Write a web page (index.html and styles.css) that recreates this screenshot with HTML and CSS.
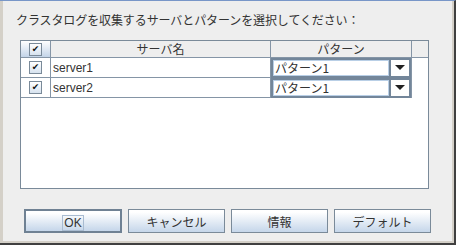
FILE: index.html
```html
<!DOCTYPE html>
<html lang="ja">
<head>
  <meta charset="UTF-8">
  <title>クラスタログ収集</title>
  <link rel="stylesheet" href="styles.css">
</head>
<body>
  <div class="frame">
    <div class="dialog">
      <p class="prompt">クラスタログを収集するサーバとパターンを選択してください：</p>

      <div class="grid">
        <div class="row head">
          <div class="cell c-check sel"><span class="box">✔</span></div>
          <div class="cell c-name">サーバ名</div>
          <div class="cell c-pat">パターン</div>
          <div class="cell c-fill"></div>
        </div>
        <div class="row">
          <div class="cell c-check"><span class="box">✔</span></div>
          <div class="cell c-name">server1</div>
          <div class="cell c-pat">
            <div class="combo"><span class="val">パターン1</span><span class="arrow"></span></div>
          </div>
        </div>
        <div class="row">
          <div class="cell c-check"><span class="box">✔</span></div>
          <div class="cell c-name">server2</div>
          <div class="cell c-pat">
            <div class="combo"><span class="val">パターン1</span><span class="arrow"></span></div>
          </div>
        </div>
      </div>

      <div class="buttons">
        <button class="btn default"><span class="focus">OK</span></button>
        <button class="btn">キャンセル</button>
        <button class="btn">情報</button>
        <button class="btn">デフォルト</button>
      </div>
    </div>
  </div>
</body>
</html>
```

FILE: styles.css
```css
* { box-sizing: border-box; margin: 0; padding: 0; }
body {
  width: 456px;
  height: 245px;
  overflow: hidden;
  background: #eeeeee;
  font-family: "Liberation Sans", "Noto Sans CJK JP", sans-serif;
  font-size: 12px;
  color: #333;
}
.frame {
  width: 456px;
  height: 245px;
  border-top: 1px solid #7896c8;
  border-right: 2px solid #404040;
  border-bottom: 2px solid #404040;
}
.dialog {
  height: 100%;
  background: #eeeeee;
  border-left: 3px solid #d4d0c8;
  border-right: 2px solid #d4d0c8;
  border-bottom: 2px solid #d4d0c8;
  padding: 11px 0 0 13px;
}
.prompt {
  font-family: "Noto Sans CJK JP", sans-serif;
  line-height: 16px;
  height: 16px;
  letter-spacing: -0.1px;
}
.grid {
  margin: 12px 0 0 4px;
  width: 409px;
  height: 149px;
  border: 1px solid #7a8a99;
  background: #fff;
}
.row {
  display: flex;
  height: 20px;
}
.row.head {
  height: 17px;
  background: #eeeeee;
}
.cell {
  border-right: 1px solid #8595a6;
  border-bottom: 1px solid #8595a6;
  display: flex;
  align-items: center;
  line-height: 16px;
}
.c-check { width: 30px; justify-content: center; }
.c-name { width: 220px; padding-left: 2px; }
.c-pat { width: 141px; border-bottom: none; }
.c-fill { flex: 1; border-right: none; }
.head .c-name, .head .c-pat {
  justify-content: center;
  font-family: "Noto Sans CJK JP", sans-serif;
  padding: 0;
}
.head .c-pat { border-bottom: 1px solid #8595a6; }
.head .sel { background: linear-gradient(#ffffff, #c3d4e8); }
.box {
  width: 13px;
  height: 13px;
  border: 1px solid #7a8a99;
  background: linear-gradient(#ffffff, #d6e2ef);
  font-size: 9px;
  line-height: 11px;
  text-align: center;
  color: #111;
  font-family: "DejaVu Sans", sans-serif;
}
.combo {
  display: flex;
  width: 100%;
  height: 100%;
  border: 2px solid #73869a;
  background: #fff;
}
.val {
  flex: 1;
  border: 1px solid #b9cfe6;
  font-family: "Noto Sans CJK JP", sans-serif;
  line-height: 14px;
  padding-left: 1px;
}
.arrow {
  width: 20px;
  border-left: 2px solid #73869a;
  background: #fff;
  position: relative;
}
.arrow::after {
  content: "";
  position: absolute;
  left: 4px;
  top: 5px;
  border-left: 5px solid transparent;
  border-right: 5px solid transparent;
  border-top: 5px solid #222;
}
.buttons {
  display: flex;
  gap: 6px;
  margin: 20px 0 0 8px;
}
.btn {
  width: 97px;
  height: 24px;
  border: 1px solid #7a8a99;
  background: linear-gradient(#ffffff 10%, #c5d6ea);
  font-family: "Noto Sans CJK JP", sans-serif;
  font-size: 12px;
  color: #333;
}
.btn.default { width: 98px; border: 2px solid #6f8193; }
.focus {
  border: 1px solid #a9bcd1;
  padding: 0 1px;
  font-family: "Liberation Sans", sans-serif;
}
```
